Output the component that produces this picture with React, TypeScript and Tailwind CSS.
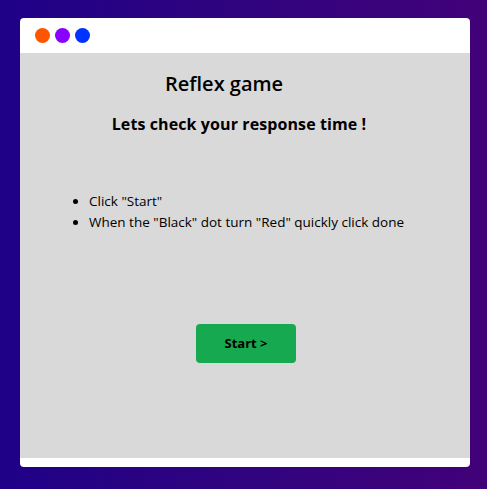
import React from "react";

const Dot = ({ color }: { color: string }) => (
  <div className={`h-[15px] w-[15px] rounded-full ${color}`} />
);

export default function App() {
  return (
    <div
      className="flex h-[489px] w-[487px] items-start bg-gradient-to-r from-[#1e0087] to-[#410078] pl-[20px] pt-[18px]"
      style={{ fontFamily: '"Open Sans", "Liberation Sans", sans-serif' }}
    >
      <div className="flex h-[449px] w-[450px] flex-col overflow-hidden rounded-[4px] bg-white">
        {/* top bar */}
        <div className="flex h-[35px] items-center gap-[5px] pl-[15px]">
          <Dot color="bg-[#ff5500]" />
          <Dot color="bg-[#8800ff]" />
          <Dot color="bg-[#0033ff]" />
        </div>

        <div className="flex h-[405px] flex-col bg-[#d9d9d9]">
          <h1 className="mt-[17px] pl-[145px] text-[20px] font-semibold leading-[28px] text-black">
            Reflex game
          </h1>
          <h2 className="mt-[14px] pr-[12px] text-center text-[16px] font-bold leading-[24px] tracking-[0.1px] text-black">
            Lets check your response time !
          </h2>

          <ul className="mt-[55px] list-disc pl-[69px] text-[13.5px] leading-[21px] text-black">
            <li>Click "Start"</li>
            <li>When the "Black" dot turn "Red" quickly click done</li>
          </ul>

          <div className="mt-[91px] flex justify-center pl-[2px]">
            <button className="h-[39px] w-[100px] rounded-[4px] bg-[#17a94f] text-[13px] font-bold text-black">
              Start &gt;
            </button>
          </div>
        </div>
      </div>
    </div>
  );
}
